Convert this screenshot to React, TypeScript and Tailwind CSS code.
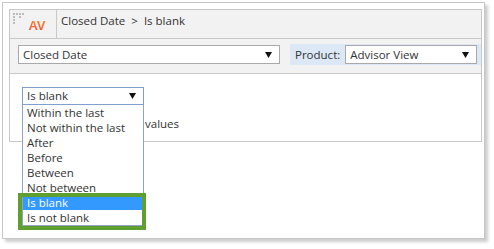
const OPTIONS = [
  "Within the last",
  "Not within the last",
  "After",
  "Before",
  "Between",
  "Not between",
  "Is blank",
  "Is not blank",
];

function Arrow() {
  return (
    <svg width="7" height="6" viewBox="0 0 7 6" className="shrink-0">
      <polygon points="0,0 7,0 3.5,6" fill="#111" />
    </svg>
  );
}

function Grip() {
  const dots = [
    [0, 0], [3, 0], [6, 0], [9, 0],
    [0, 3], [6, 3],
    [0, 6],
    [0, 9],
  ];
  return (
    <svg width="11" height="11" viewBox="0 0 11 11" className="absolute left-[3px] top-[3px]">
      {dots.map(([x, y]) => (
        <rect key={`${x}-${y}`} x={x} y={y} width="2" height="2" fill="#bdbdbd" />
      ))}
    </svg>
  );
}

export default function App() {
  return (
    <div className="w-[494px] h-[249px] bg-white font-['Open_Sans',sans-serif] text-[11.5px] text-[#333] leading-none">
      <div className="ml-[2px] mt-[2px] w-[483px] h-[237px] border border-[#c6c6c6] bg-white shadow-[3px_3px_3px_rgba(0,0,0,0.2)] pl-[6px] pt-[6px]">
        <div className="w-[473px] border border-[#c8c8c8]">
          {/* header */}
          <div className="h-[29px] flex bg-[#f2f2f2] border-b border-[#c8c8c8]">
            <div className="relative w-[47px] border-r border-[#c8c8c8] flex items-center justify-center pt-[3px] pl-[8px]">
              <Grip />
              <span className="font-['Liberation_Sans',sans-serif] font-bold text-[13px] bg-gradient-to-b from-[#ff8a1c] to-[#f0463c] bg-clip-text text-transparent">
                AV
              </span>
            </div>
            <div className="flex items-center pl-[4px] pb-[7px] gap-[6px]">
              <span>Closed Date</span>
              <span>&gt;</span>
              <span>Is blank</span>
            </div>
          </div>

          {/* field row */}
          <div className="h-[35px] bg-[#f2f2f2] border-b border-[#c8c8c8] flex items-center pl-[8px] pb-[3px]">
            <div className="w-[262px] h-[19px] border border-[#a9a9a9] bg-white flex items-center justify-between pl-[4px] pr-[7px]">
              <span>Closed Date</span>
              <Arrow />
            </div>
            <div className="ml-[10px] flex-1 h-[21px] bg-[#dce8f5] flex items-center pl-[5px] pr-[4px] gap-[5px]">
              <span>Product:</span>
              <div className="flex-1 h-[19px] border border-[#a9a9a9] bg-white flex items-center justify-between pl-[4px] pr-[7px]">
                <span>Advisor View</span>
                <Arrow />
              </div>
            </div>
          </div>

          {/* condition body */}
          <div className="relative h-[67px] pl-[12px] pt-[13px]">
            <div className="w-[122px] h-[18px] border border-[#7f9fcf] bg-white flex items-center justify-between pl-[4px] pr-[7px]">
              <span>Is blank</span>
              <Arrow />
            </div>
            <div className="mt-[13px] pl-[123px]">values</div>

            <div className="absolute left-[12px] top-[31px] w-[122px] border border-t-0 border-[#8da4c4] bg-white">
              {OPTIONS.map((o) => (
                <div
                  key={o}
                  className={`h-[15px] flex items-center pl-[4px] ${
                    o === "Is blank" ? "bg-[#3399ff] text-white" : ""
                  }`}
                >
                  {o}
                </div>
              ))}
            </div>

            <div className="absolute left-[8px] top-[119px] w-[128px] h-[37px] border-[4px] border-[#5f9f2f]" />
          </div>
        </div>
      </div>
    </div>
  );
}
